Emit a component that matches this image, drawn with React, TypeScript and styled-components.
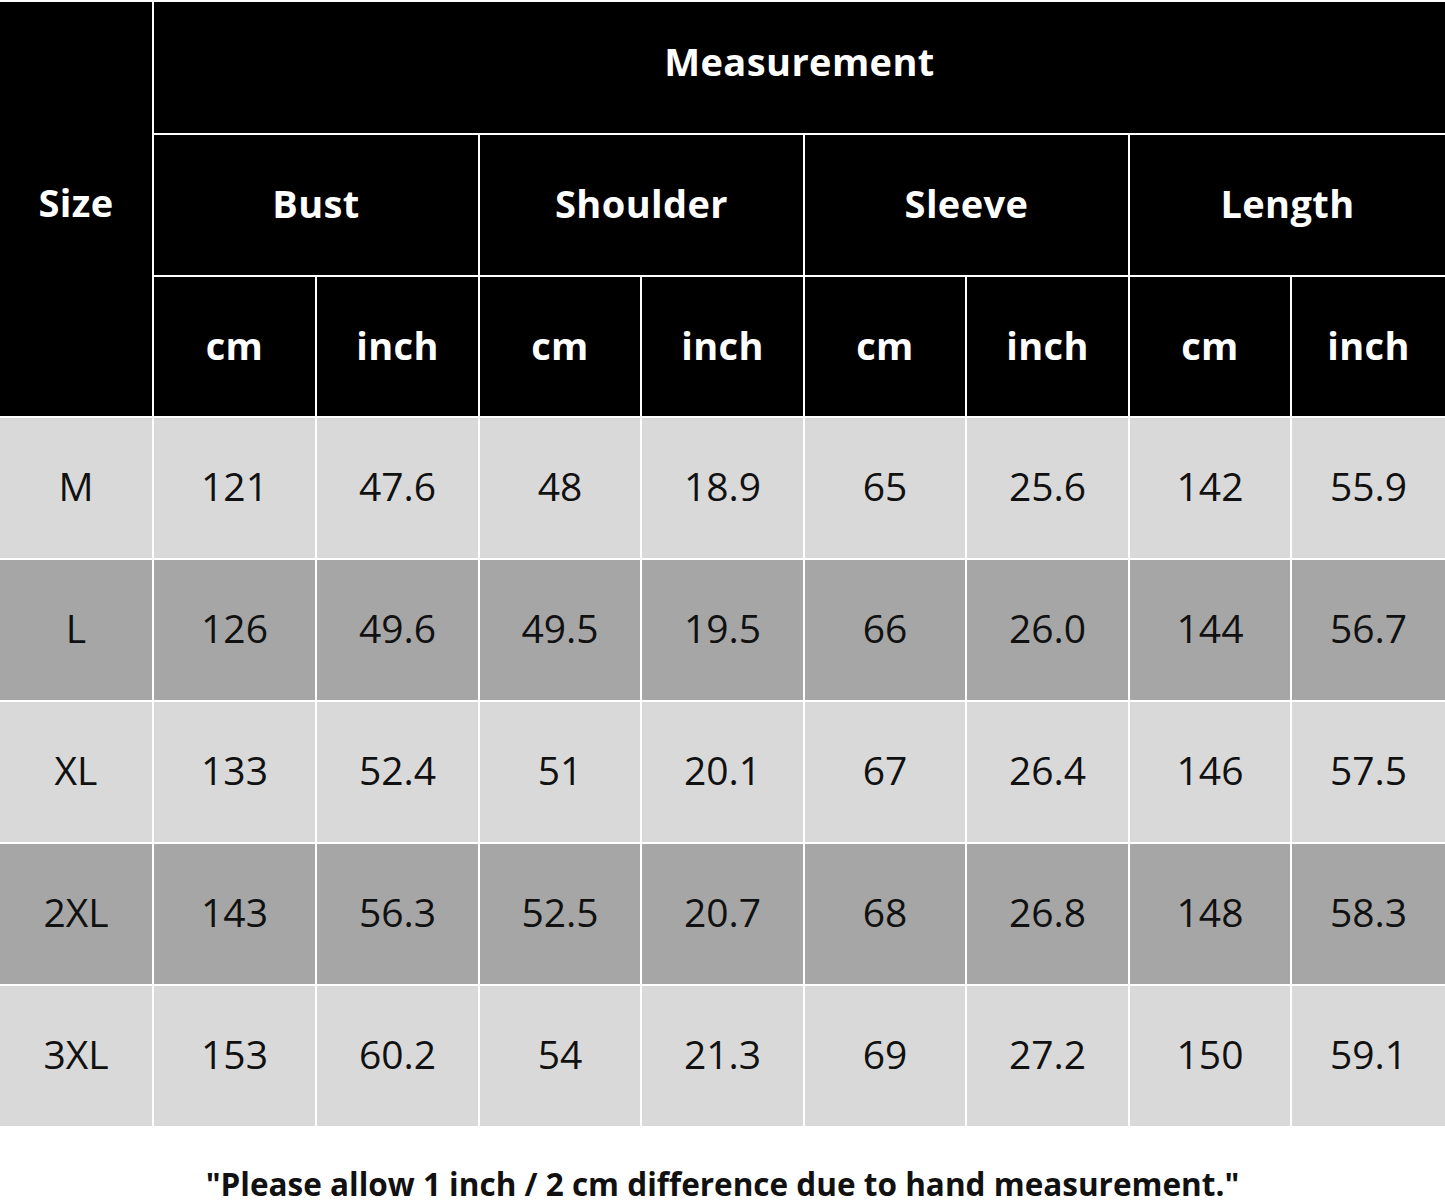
import React from 'react';
import styled, { createGlobalStyle } from 'styled-components';

const GlobalStyle = createGlobalStyle`
  html, body {
    margin: 0;
    padding: 0;
    background: #ffffff;
  }
  body {
    font-family: 'Open Sans', 'Liberation Sans', sans-serif;
  }
`;

interface SizeRow {
  size: string;
  values: string[];
}

const groups = ['Bust', 'Shoulder', 'Sleeve', 'Length'];

const rows: SizeRow[] = [
  { size: 'M', values: ['121', '47.6', '48', '18.9', '65', '25.6', '142', '55.9'] },
  { size: 'L', values: ['126', '49.6', '49.5', '19.5', '66', '26.0', '144', '56.7'] },
  { size: 'XL', values: ['133', '52.4', '51', '20.1', '67', '26.4', '146', '57.5'] },
  { size: '2XL', values: ['143', '56.3', '52.5', '20.7', '68', '26.8', '148', '58.3'] },
  { size: '3XL', values: ['153', '60.2', '54', '21.3', '69', '27.2', '150', '59.1'] },
];

export default function App() {
  return (
    <Page>
      <GlobalStyle />
      <Table>
        <HeadCell $rowSpan={3} $lift={14}>
          Size
        </HeadCell>
        <HeadCell $colSpan={8} $lift={14}>
          Measurement
        </HeadCell>
        {groups.map((g) => (
          <HeadCell key={g} $colSpan={2}>
            {g}
          </HeadCell>
        ))}
        {groups.map((g) => (
          <React.Fragment key={g}>
            <HeadCell>cm</HeadCell>
            <HeadCell>inch</HeadCell>
          </React.Fragment>
        ))}
        {rows.map((row, i) => (
          <React.Fragment key={row.size}>
            <DataCell $dark={i % 2 === 1}>{row.size}</DataCell>
            {row.values.map((v, j) => (
              <DataCell key={j} $dark={i % 2 === 1}>
                {v}
              </DataCell>
            ))}
          </React.Fragment>
        ))}
      </Table>
      <Note>"Please allow 1 inch / 2 cm difference due to hand measurement."</Note>
    </Page>
  );
}

const Page = styled.div`
  width: 1445px;
  height: 1204px;
  background: #ffffff;
  overflow: hidden;
`;

const Table = styled.div`
  display: grid;
  grid-template-columns: 152px 161px 161px 160px 161px 160px 161px 160px 1fr;
  grid-template-rows: 131px 140px 139px repeat(5, 140px);
  gap: 2px;
  padding-top: 2px;
  background: #ffffff;
`;

const Cell = styled.div<{ $rowSpan?: number; $colSpan?: number }>`
  display: flex;
  align-items: center;
  justify-content: center;
  grid-row: span ${(p) => p.$rowSpan ?? 1};
  grid-column: span ${(p) => p.$colSpan ?? 1};
`;

const HeadCell = styled(Cell)<{ $lift?: number }>`
  background: #000000;
  color: #ffffff;
  font-weight: 700;
  font-size: 38px;
  letter-spacing: 0.4px;
  padding-bottom: ${(p) => p.$lift ?? 4}px;
`;

const DataCell = styled(Cell)<{ $dark?: boolean }>`
  background: ${(p) => (p.$dark ? '#a6a6a6' : '#d9d9d9')};
  color: #111111;
  font-size: 39px;
  font-weight: 400;
  padding-bottom: 6px;
`;

const Note = styled.div`
  margin-top: 36px;
  text-align: center;
  font-weight: 700;
  font-size: 31.5px;
  color: #111111;
`;
